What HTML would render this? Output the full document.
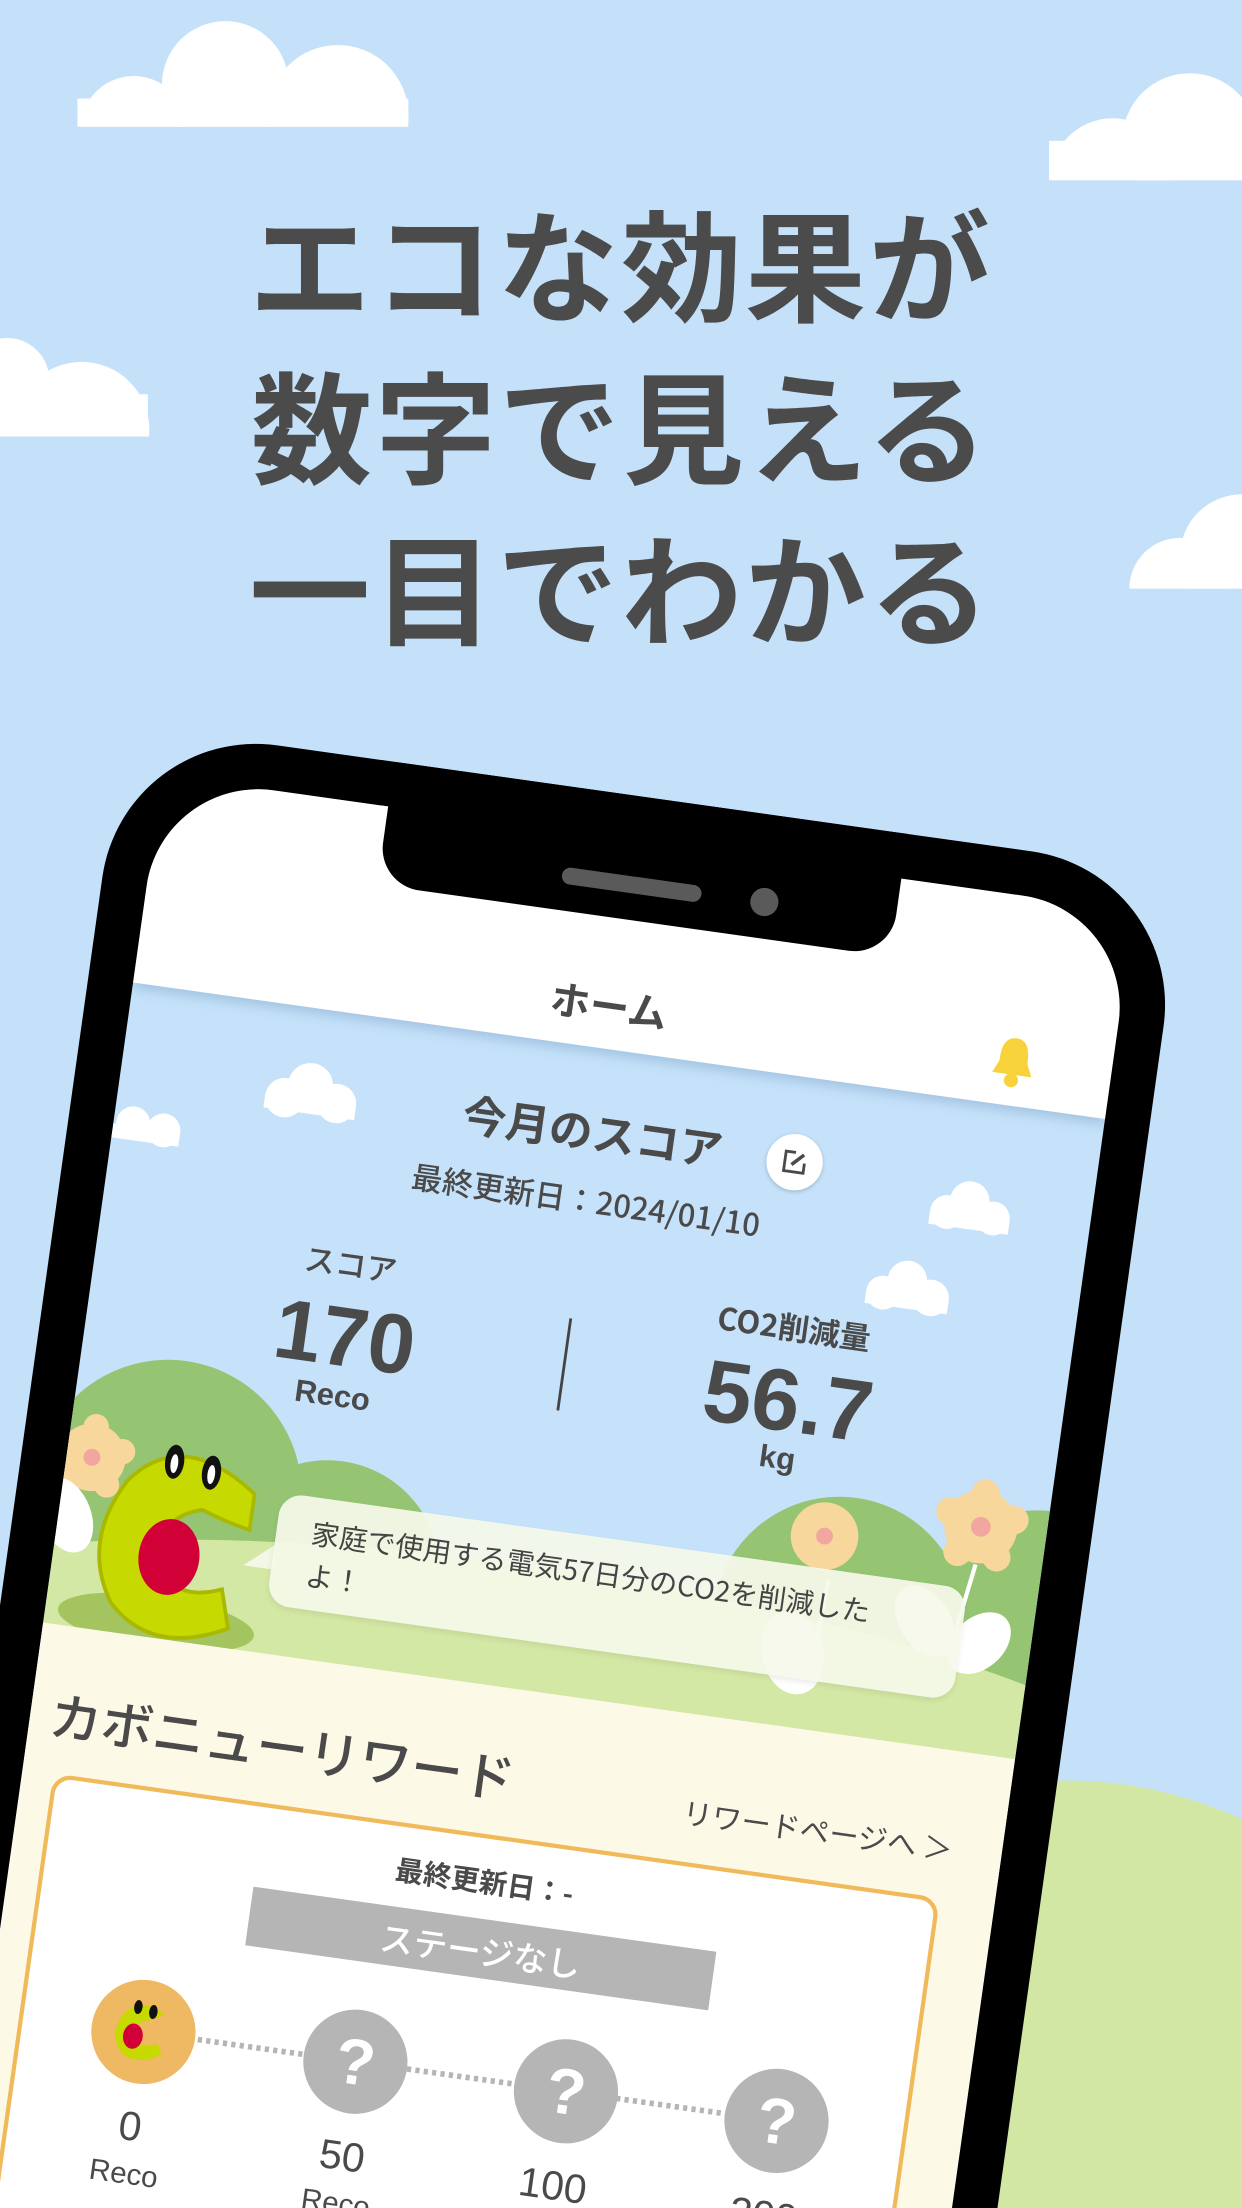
<!DOCTYPE html>
<html><head><meta charset="utf-8">
<style>
*{margin:0;padding:0;box-sizing:border-box}
html,body{width:1242px;height:2208px;overflow:hidden;background:#c5e1f9}
#w{position:absolute;left:0;top:0;width:882px;height:1568px;transform:scale(1.40816);transform-origin:0 0;overflow:hidden;clip-path:inset(0);background:#c5e1f9;font-family:"Liberation Sans","Noto Sans CJK JP",sans-serif;color:#4a4a4a}
.t{position:absolute;left:0;width:882px;text-align:center;font-family:"Noto Sans CJK JP",sans-serif;font-weight:700;font-size:86px;line-height:1;color:#4b4b4b;letter-spacing:2px}
#ph{position:absolute;left:88px;top:514px;width:761px;height:1300px;background:#000;border-radius:110px;transform:rotate(8deg);transform-origin:0 0}
#sc{position:absolute;left:32px;top:32px;width:697px;height:1260px;border-radius:80px;background:#c5e2fa;overflow:hidden}
.a{position:absolute;transform:translate(-50%,-50%);white-space:nowrap;line-height:1}
.c{position:absolute;border-radius:50%}
.jp{font-family:"Noto Sans CJK JP",sans-serif}
</style></head><body><div id="w">
<svg width="882" height="1568" style="position:absolute;left:0;top:0">
<defs>
<clipPath id="k1"><rect x="0" y="0" width="882" height="90"/></clipPath>
<clipPath id="k2"><rect x="0" y="0" width="882" height="128"/></clipPath>
<clipPath id="k3"><rect x="0" y="200" width="882" height="110"/></clipPath>
<clipPath id="k4"><rect x="0" y="300" width="882" height="118"/></clipPath>
</defs>
<g fill="#fff">
<g clip-path="url(#k1)"><circle cx="95" cy="92" r="38"/><circle cx="160" cy="60" r="45"/><circle cx="240" cy="82" r="50"/><rect x="55" y="70" width="235" height="20"/></g>
<g clip-path="url(#k2)"><circle cx="790" cy="128" r="44"/><circle cx="845" cy="100" r="48"/><rect x="745" y="100" width="137" height="28"/></g>
<g clip-path="url(#k3)"><circle cx="5" cy="270" r="30"/><circle cx="58" cy="305" r="48"/><rect x="0" y="280" width="105" height="30"/></g>
<g clip-path="url(#k4)"><circle cx="838" cy="418" r="36"/><circle cx="882" cy="395" r="44"/></g>
</g>
<path d="M690,1272 Q790,1250 882,1292 L882,1568 L690,1568 Z" fill="#d3e7a5"/>
</svg>
<div class="t" style="top:142px">エコな効果が</div>
<div class="t" style="top:257px">数字で見える</div>
<div class="t" style="top:372px">一目でわかる</div>

<div id="ph">
<div id="sc">
 <svg width="697" height="700" style="position:absolute;left:0;top:0">
 <g fill="#fff">
 <circle cx="118" cy="215" r="14"/><circle cx="135" cy="204" r="16"/><circle cx="155" cy="214" r="14"/><rect x="104" y="214" width="65" height="10"/>
 <circle cx="14" cy="248" r="12"/><circle cx="36" cy="250" r="12"/><rect x="0" y="250" width="48" height="10"/>
 <circle cx="595" cy="230" r="12"/><circle cx="610" cy="220" r="14"/><circle cx="628" cy="230" r="12"/><rect x="583" y="230" width="57" height="10"/>
 <circle cx="558" cy="293" r="12"/><circle cx="574" cy="282" r="14"/><circle cx="592" cy="292" r="13"/><rect x="546" y="292" width="59" height="10"/>
 </g>
 <circle cx="75" cy="505" r="95" fill="#95c573"/>
 <circle cx="195" cy="545" r="80" fill="#95c573"/>
 <circle cx="560" cy="530" r="90" fill="#95c573"/>
 <circle cx="700" cy="515" r="85" fill="#95c573"/>
 <ellipse cx="340" cy="660" rx="540" ry="140" fill="#d4e8a5"/>
 <g transform="translate(18,487)"><circle r="24" fill="#f8d79c"/><circle cx="0" cy="-22" r="9" fill="#f8d79c"/><circle cx="21" cy="-7" r="9" fill="#f8d79c"/><circle cx="13" cy="18" r="9" fill="#f8d79c"/><circle cx="-13" cy="18" r="9" fill="#f8d79c"/><circle cx="-21" cy="-7" r="9" fill="#f8d79c"/><circle r="6" fill="#f1a7a0"/></g>
 <g transform="translate(541,470)"><circle r="24" fill="#f8d79c"/><circle r="6" fill="#f1a7a0"/></g>
 <path d="M548,500 L545,560" stroke="#fff" stroke-width="3"/>
 <ellipse cx="530" cy="555" rx="22" ry="30" fill="#fff" transform="rotate(-20 530 555)"/>
 <g transform="translate(650,448)"><circle r="26" fill="#f8d79c"/><circle cx="0" cy="-24" r="10" fill="#f8d79c"/><circle cx="23" cy="-8" r="10" fill="#f8d79c"/><circle cx="14" cy="20" r="10" fill="#f8d79c"/><circle cx="-14" cy="20" r="10" fill="#f8d79c"/><circle cx="-23" cy="-8" r="10" fill="#f8d79c"/><circle r="7" fill="#f1a7a0"/></g>
 <path d="M650,475 L640,540" stroke="#fff" stroke-width="3"/>
 <ellipse cx="620" cy="520" rx="18" ry="28" fill="#fff" transform="rotate(-40 620 520)"/>
 <ellipse cx="660" cy="530" rx="18" ry="26" fill="#fff" transform="rotate(40 660 530)"/>
 <ellipse cx="5" cy="530" rx="18" ry="28" fill="#fff" transform="rotate(-30 5 530)"/>
 <g transform="translate(82,540) scale(1.35) translate(-82,-540)">
 <ellipse cx="80" cy="582" rx="52" ry="14" fill="#a3c45e"/>
 <path d="M122,508 Q80,478 55,510 Q35,545 55,575 Q80,600 118,580 L112,560 Q88,570 78,552 Q72,527 96,520 Q110,525 122,527 Z" fill="#c6d900" stroke="#a9b800" stroke-width="2"/>
 <ellipse cx="82" cy="547" rx="16" ry="20" fill="#d10036"/>
 <ellipse cx="78" cy="497" rx="5" ry="9" fill="#111"/><ellipse cx="98" cy="500" rx="5" ry="9" fill="#111"/>
 <ellipse cx="78" cy="498" rx="2" ry="5" fill="#fff"/><ellipse cx="98" cy="501" rx="2" ry="5" fill="#fff"/>
 </g>
 <path d="M156,530 L135,548 L158,548 Z" fill="#f2f7e6"/>
 </svg>
 <div style="position:absolute;left:0;top:608px;width:697px;height:800px;background:#fdf9e7"></div>
 <div style="position:absolute;left:0;top:0;width:697px;height:149px;background:#fff;box-shadow:0 4px 8px rgba(100,140,180,.35)"></div>
 <div class="a jp" style="left:337px;top:118px;font-size:28px;font-weight:700">ホーム</div>
 <svg style="position:absolute;left:609px;top:98px" width="36" height="40" viewBox="0 0 36 40"><path d="M18,3 C9,3 8,12 8,20 L4,29 L32,29 L28,20 C28,12 27,3 18,3 Z" fill="#f8d23a"/><circle cx="18" cy="33" r="5" fill="#f8d23a"/></svg>

 <div class="a jp" style="left:338px;top:207px;font-size:31px;font-weight:700">今月のスコア</div>
 <div class="c" style="left:463px;top:190px;width:40px;height:40px;background:#fff;box-shadow:0 1px 3px rgba(0,0,0,.2)"></div>
 <svg style="position:absolute;left:473px;top:200px" width="20" height="20" viewBox="0 0 20 20"><path d="M10,3 H3 V17 H17 V10" fill="none" stroke="#4a4a4a" stroke-width="2"/><path d="M8,12 L16,4" stroke="#4a4a4a" stroke-width="2.5"/></svg>
 <div class="a jp" style="left:340px;top:257px;font-size:22px;font-weight:500">最終更新日：2024/01/10</div>
 <div class="a jp" style="left:181px;top:325px;font-size:22px;font-weight:500">スコア</div>
 <div class="a" style="left:184px;top:378px;font-size:60px;font-weight:700">170</div>
 <div class="a" style="left:181px;top:420px;font-size:22px;font-weight:700">Reco</div>
 <div style="position:absolute;left:340px;top:342px;width:1.5px;height:66px;background:#444"></div>
 <div class="a jp" style="left:499px;top:326px;font-size:22px;font-weight:700">CO2削減量</div>
 <div class="a" style="left:502px;top:380px;font-size:62px;font-weight:700">56.7</div>
 <div class="a" style="left:500px;top:420px;font-size:22px;font-weight:700">kg</div>

 <div style="position:absolute;left:155px;top:493px;width:492px;height:80px;border-radius:16px;background:rgba(245,249,234,.93);box-shadow:0 2px 4px rgba(0,0,0,.08)"></div>
 <div class="jp" style="position:absolute;left:180px;top:503px;font-size:20px;line-height:30px;color:#444">家庭で使用する電気57日分のCO2を削減した<br>よ！</div>

 <div class="jp" style="position:absolute;left:14px;top:652px;font-size:37px;font-weight:500;line-height:1">カボニューリワード</div>
 <div class="jp" style="position:absolute;right:35px;top:668px;font-size:21px;line-height:1">リワードページへ ＞</div>
 <div style="position:absolute;left:22px;top:713px;width:636px;height:700px;border:3px solid #f0b95a;border-radius:14px;background:#fff"></div>
 <div class="a jp" style="left:336px;top:746px;font-size:20px;font-weight:700">最終更新日：-</div>
 <div style="position:absolute;left:174px;top:773px;width:332px;height:42px;background:#b5b5b5"></div>
 <div class="a jp" style="left:340px;top:795px;font-size:24px;color:#fff;font-weight:500">ステージなし</div>
 <svg style="position:absolute;left:0;top:840px" width="697" height="100">
  <line x1="150" y1="46" x2="570" y2="46" stroke="#b5b5b5" stroke-width="4" stroke-dasharray="3 3"/>
  <circle cx="111" cy="46" r="37" fill="#efb862"/>
  <path d="M124,32 Q105,20 95,36 Q86,52 99,64 Q112,70 126,60 L122,53 Q110,58 105,52 Q100,43 110,39 Z" fill="#c6d900"/>
  <ellipse cx="104" cy="50" rx="7" ry="9" fill="#d10036"/>
  <ellipse cx="105" cy="29" rx="3" ry="5" fill="#111"/><ellipse cx="116" cy="31" rx="3" ry="5" fill="#111"/>
  <g fill="#b5b5b5"><circle cx="263" cy="46" r="37"/><circle cx="414" cy="46" r="37"/><circle cx="565" cy="46" r="37"/></g>
  <g fill="#fff" font-family="Liberation Sans" font-weight="700" font-size="46" text-anchor="middle"><text x="263" y="62">?</text><text x="414" y="62">?</text><text x="565" y="62">?</text></g>
 </svg>
 <div class="a" style="left:111px;top:955px;font-size:29px">0</div>
 <div class="a" style="left:111px;top:988px;font-size:21px">Reco</div>
 <div class="a" style="left:263px;top:955px;font-size:29px">50</div>
 <div class="a" style="left:263px;top:988px;font-size:21px">Reco</div>
 <div class="a" style="left:414px;top:955px;font-size:29px">100</div>
 <div class="a" style="left:414px;top:988px;font-size:21px">Reco</div>
 <div class="a" style="left:565px;top:955px;font-size:29px">200</div>
 <div class="a" style="left:565px;top:988px;font-size:21px">Reco</div>
</div>
<div style="position:absolute;left:194px;top:0;width:368px;height:88px;background:#000;border-radius:0 0 30px 30px"></div>
<div style="position:absolute;left:323px;top:57px;width:100px;height:12px;border-radius:6px;background:#5a5a5a"></div>
<div class="c" style="left:458px;top:52px;width:20px;height:20px;background:#5a5a5a"></div>
</div>
</div></body></html>
